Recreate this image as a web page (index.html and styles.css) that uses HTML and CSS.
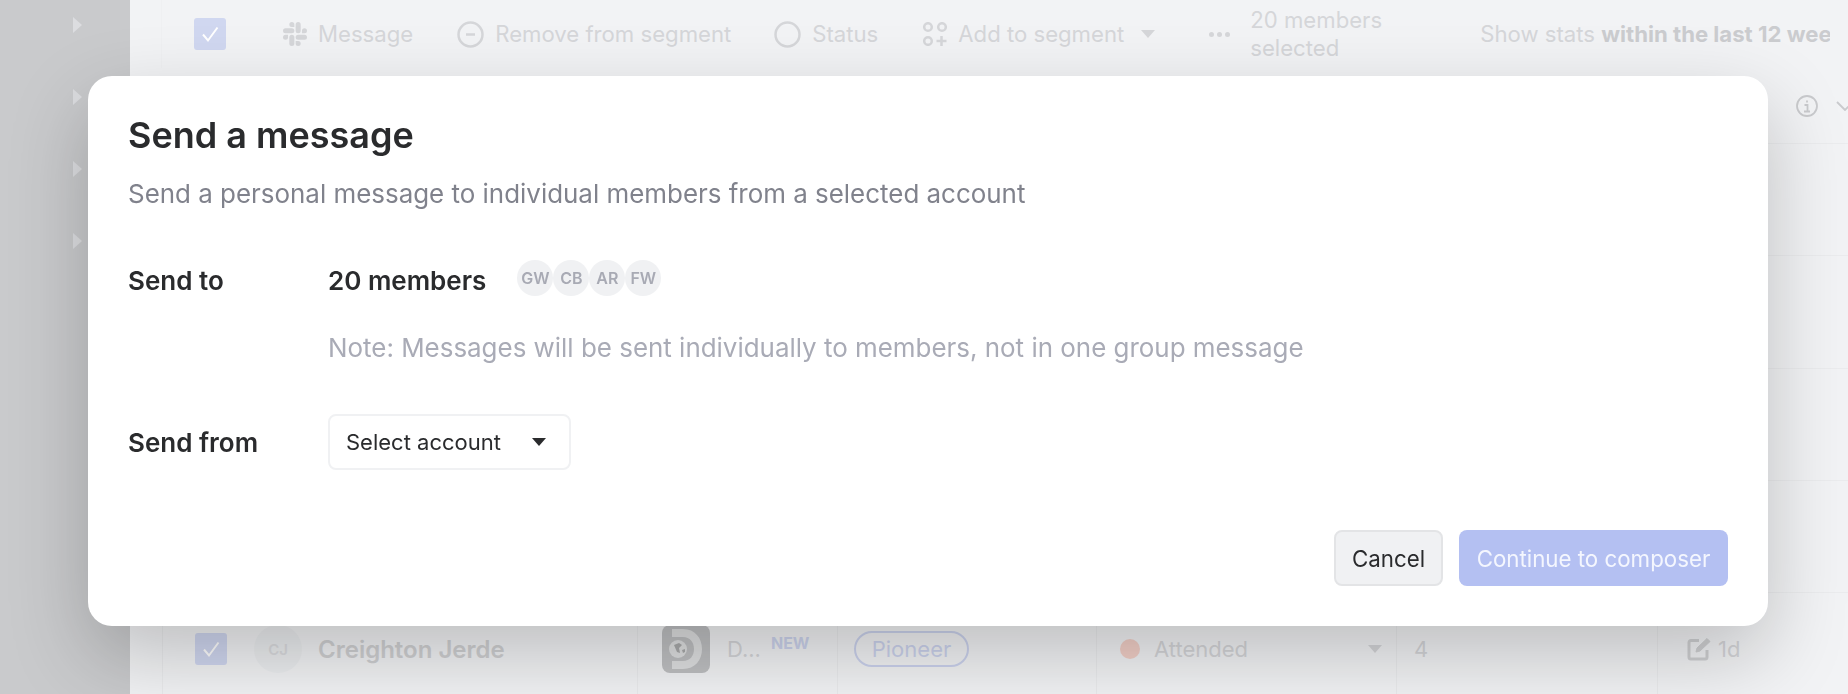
FILE: index.html
```html
<!DOCTYPE html>
<html lang="en">
<head>
<meta charset="utf-8">
<title>Send a message</title>
<link rel="stylesheet" href="styles.css">
</head>
<body>
<div class="app">
  <aside class="sidebar">
    <span class="tri"></span><span class="tri"></span><span class="tri"></span><span class="tri"></span>
  </aside>
  <main class="main">
    <div class="toolbar">
      <span class="check"><svg viewBox="0 0 32 32" width="32" height="32"><path d="M9 16.500l5 6 9.500-13" fill="none" stroke="#fff" stroke-width="2"/></svg></span>
      <span class="tool t-msg">
        <svg width="24" height="24" viewBox="0 0 24 24" fill="#d5d6d9"><path d="M5.042 15.165a2.528 2.528 0 0 1-2.52 2.523A2.528 2.528 0 0 1 0 15.165a2.527 2.527 0 0 1 2.522-2.52h2.52v2.52zM6.313 15.165a2.527 2.527 0 0 1 2.521-2.52 2.527 2.527 0 0 1 2.521 2.52v6.313A2.528 2.528 0 0 1 8.834 24a2.528 2.528 0 0 1-2.521-2.522v-6.313zM8.834 5.042a2.528 2.528 0 0 1-2.521-2.52A2.528 2.528 0 0 1 8.834 0a2.528 2.528 0 0 1 2.521 2.522v2.52H8.834zM8.834 6.313a2.528 2.528 0 0 1 2.521 2.521 2.528 2.528 0 0 1-2.521 2.521H2.522A2.528 2.528 0 0 1 0 8.834a2.528 2.528 0 0 1 2.522-2.521h6.312zM18.956 8.834a2.528 2.528 0 0 1 2.522-2.521A2.528 2.528 0 0 1 24 8.834a2.528 2.528 0 0 1-2.522 2.521h-2.522V8.834zM17.688 8.834a2.528 2.528 0 0 1-2.523 2.521 2.527 2.527 0 0 1-2.52-2.521V2.522A2.527 2.527 0 0 1 15.165 0a2.528 2.528 0 0 1 2.523 2.522v6.312zM15.165 18.956a2.528 2.528 0 0 1 2.523 2.522A2.528 2.528 0 0 1 15.165 24a2.527 2.527 0 0 1-2.52-2.522v-2.522h2.52zM15.165 17.688a2.527 2.527 0 0 1-2.52-2.523 2.526 2.526 0 0 1 2.52-2.52h6.313A2.527 2.527 0 0 1 24 15.165a2.528 2.528 0 0 1-2.522 2.523h-6.313z"/></svg>
        Message</span>
      <span class="tool t-rem">
        <svg width="27" height="27" viewBox="0 0 27 27" fill="none" stroke="#d5d6d9" stroke-width="2.500"><circle cx="13.500" cy="13.500" r="12"/><path d="M9 13.500h9"/></svg>
        Remove from segment</span>
      <span class="tool t-status">
        <svg width="27" height="27" viewBox="0 0 27 27" fill="none" stroke="#d5d6d9" stroke-width="2.500"><circle cx="13.500" cy="13.500" r="12"/></svg>
        Status</span>
      <span class="tool t-add">
        <svg width="24" height="24" viewBox="0 0 24 24" fill="none" stroke="#d5d6d9" stroke-width="2.500"><circle cx="5" cy="5" r="3.800"/><circle cx="19" cy="5" r="3.800"/><circle cx="5" cy="19" r="3.800"/><path d="M18.500 14v10M13.500 19h10"/></svg>
        Add to segment<i class="caret"></i></span>
      <span class="dots"><b></b><b></b><b></b></span>
      <span class="count">20 members<br>selected</span>
      <span class="stats">Show stats <b>within the last 12 weeks</b></span>
    </div>
    <div class="head">
      <svg width="22" height="22" viewBox="0 0 22 22" fill="none" stroke="#c9cacd" stroke-width="1.800"><circle cx="11" cy="11" r="10"/><path d="M8.500 10h3v6M8 16.500h6M11 5.500v2"/></svg>
      <svg class="chev" width="18" height="10" viewBox="0 0 18 10" fill="none" stroke="#c9cacd" stroke-width="1.800"><path d="M1 1l8 8 8-8"/></svg>
    </div>
    <div class="row"></div>
    <div class="row"></div>
    <div class="row"></div>
    <div class="row"></div>
    <div class="row grid">
      <div class="cell c-name">
        <span class="check"><svg viewBox="0 0 32 32" width="32" height="32"><path d="M9 16.500l5 6 9.500-13" fill="none" stroke="#fff" stroke-width="2"/></svg></span>
        <span class="avatar-lg">CJ</span>
        <span class="name">Creighton Jerde</span>
      </div>
      <div class="cell c-org">
        <span class="logo"><svg width="48" height="48" viewBox="0 0 48 48"><path d="M10 4h11c12 0 19 9 19 20s-7 20-19 20H10v-8h11c7 0 11-5 11-12s-4-12-11-12H10z" fill="#dfe0e1"/><circle cx="16" cy="24" r="9" fill="#dfe0e1"/><path d="M12 20l5-2 3 2-3 3 1 5-3-1zM20 25l3-1v3l-2 1z" fill="#a9aaab"/></svg></span>
        <span class="org">D...</span><span class="new">NEW</span>
      </div>
      <div class="cell c-tag"><span class="pill">Pioneer</span></div>
      <div class="cell c-status"><i class="dot"></i><span class="attended">Attended</span><i class="caret"></i></div>
      <div class="cell c-num">4</div>
      <div class="cell c-time">
        <svg width="24" height="24" viewBox="0 0 24 24" fill="none" stroke="#d0d1d3" stroke-width="3"><path d="M12 3.500H4a2 2 0 0 0-2 2V20a2 2 0 0 0 2 2h14a2 2 0 0 0 2-2v-7"/><path d="M9 15l1-4L20 1.500l3 3L13 14z" fill="#d0d1d3" stroke-width="1"/></svg>
        1d</div>
    </div>
  </main>
</div>
<div class="overlay"></div>
<section class="modal">
  <h1 class="title">Send a message</h1>
  <p class="sub">Send a personal message to individual members from a selected account</p>
  <div class="field f-to">
    <span class="label">Send to</span>
    <div class="to-line">
      <strong class="members">20 members</strong>
      <span class="avatars"><span>GW</span><span>CB</span><span>AR</span><span>FW</span></span>
    </div>
  </div>
  <p class="note">Note: Messages will be sent individually to members, not in one group message</p>
  <div class="field f-from">
    <span class="label">Send from</span>
    <button class="select">Select account<i class="caret dark"></i></button>
  </div>
  <div class="actions">
    <button class="btn cancel">Cancel</button>
    <button class="btn primary">Continue to composer</button>
  </div>
</section>
</body>
</html>
```
FILE: styles.css
```css
* { box-sizing: border-box; }
html, body { margin: 0; height: 100%; overflow: hidden; }
body { font-family: Inter, "Liberation Sans", sans-serif; background: #f2f3f5; color: #2a2b2d; }

.app { display: flex; height: 694px; width: 1848px; overflow: hidden; }
.sidebar { width: 130px; flex: none; background: #c9cacc; display: flex; flex-direction: column; align-items: flex-end; gap: 56px; padding: 17px 48px 0 0; }
.tri { width: 0; height: 0; border-left: 9px solid #dcdde0; border-top: 8px solid transparent; border-bottom: 8px solid transparent; }

.main { flex: 1; min-width: 0; background: #f2f3f5; padding-left: 32px; }
.toolbar { height: 68px; display: flex; align-items: center; padding-left: 32px; font-size: 22.15px; color: #d5d6d9; white-space: nowrap; overflow: hidden; width: 1669px; border-left: 1px solid #eff0f2; margin-left: -1px; }
.toolbar > * { flex: none; }
.check { width: 32px; height: 32px; flex: none; border-radius: 3px; background: #d0d7f0; display: block; }
.tool { display: inline-flex; align-items: center; gap: 11px; }
.t-msg { margin-left: 57px; }
.t-rem { margin-left: 44px; }
.t-status { margin-left: 43px; }
.t-add { margin-left: 45px; }
.caret { display: inline-block; width: 0; height: 0; border-left: 7px solid transparent; border-right: 7px solid transparent; border-top: 8px solid #d5d6d9; }
.t-add .caret { margin-left: 6px; }
.dots { display: inline-flex; gap: 3px; margin-left: 54px; }
.dots b { width: 5px; height: 5px; border-radius: 50%; background: #d5d6d9; }
.count { margin-left: 20px; line-height: 28px; width: 199px; }
.stats { margin-left: 31px; }
.stats b { color: #cbcccf; font-weight: 700; }

.head { height: 76px; display: flex; align-items: center; justify-content: flex-end; gap: 18px; border-bottom: 1px solid #ebecee; margin-right: -6px; }
.row { height: 112.250px; border-bottom: 1px solid #ebecee; }
.grid { display: grid; grid-template-columns: 475px 200px 259px 300px 261px 1fr; border-bottom: 0; }
.cell { display: flex; align-items: center; border-left: 1px solid #eaebed; font-size: 22px; color: #d5d6d9; white-space: nowrap; }
.c-name { padding-left: 32px; }
.avatar-lg { width: 48px; height: 48px; border-radius: 50%; background: #eceef0; margin-left: 27px; display: flex; align-items: center; justify-content: center; font-size: 15px; color: #dcdde0; font-weight: 600; flex: none; }
.name { margin-left: 16px; font-size: 24px; font-weight: 600; color: #d0d1d3; }
.c-org { padding-left: 24px; }
.logo { width: 48px; height: 48px; border-radius: 8px; background: #bfc0c2; flex: none; display: block; }
.org { margin-left: 17px; }
.new { font-size: 16px; font-weight: 700; color: #cdd4ee; margin: -12px 0 0 10px; }
.c-tag { padding-left: 16px; }
.pill { height: 36px; width: 115px; border: 2px solid #ccd3ee; border-radius: 18px; display: flex; align-items: center; justify-content: center; color: #ccd3ee; }
.c-status { padding-left: 23px; padding-right: 14px; }
.dot { width: 20px; height: 20px; border-radius: 50%; background: #f3d0c8; flex: none; }
.attended { margin-left: 14px; flex: 1; }
.c-num { padding-left: 17px; }
.c-time { padding-left: 29px; gap: 7px; }

.overlay { position: absolute; inset: 0; backdrop-filter: blur(.6px); }
.modal { position: absolute; left: 88px; top: 76px; width: 1680px; height: 550px; background: #fff; border-radius: 24px; box-shadow: 0 30px 80px rgba(0,0,0,.22); padding: 37px 40px 40px 40px; display: flex; flex-direction: column; }
.title { margin: 0; font-size: 36px; line-height: 44px; font-weight: 600; color: #2a2b2d; }
.sub { margin: 21px 0 0; font-size: 25.93px; line-height: 32px; color: #80828c; }
.field { display: flex; align-items: center; }
.label { width: 200px; flex: none; font-size: 26px; font-weight: 600; color: #2a2b2d; }
.f-to { margin-top: 52px; height: 36px; }
.to-line { display: flex; align-items: center; gap: 31px; }
.members { font-size: 26px; font-weight: 600; }
.avatars { display: flex; margin-top: -5px; }
.avatars span { width: 36px; height: 36px; border-radius: 50%; background: #f0f1f3; color: #a8aab4; font-size: 16px; font-weight: 600; display: flex; align-items: center; justify-content: center; }
.note { margin: 34px 0 0 200px; font-size: 25.93px; line-height: 32px; color: #a9abb6; }
.f-from { margin-top: 50px; }
.select { width: 243px; height: 56px; border: 2px solid #f0f1f3; border-radius: 8px; background: #fff; font: inherit; font-size: 22px; color: #2a2b2d; display: flex; align-items: center; justify-content: space-between; padding: 0 23px 0 16px; }
.caret.dark { border-top-color: #2a2b2d; }
.actions { margin-top: auto; display: flex; justify-content: flex-end; gap: 16px; }
.btn { height: 56px; border-radius: 8px; font: inherit; font-size: 22.3px; padding: 0; }
.cancel { width: 109px; background: #f0f1f3; border: 2px solid #e3e4e6; color: #2a2b2d; }
.primary { width: 269px; background: #b4c0f2; border: 0; color: #f4f6fe; }
```
